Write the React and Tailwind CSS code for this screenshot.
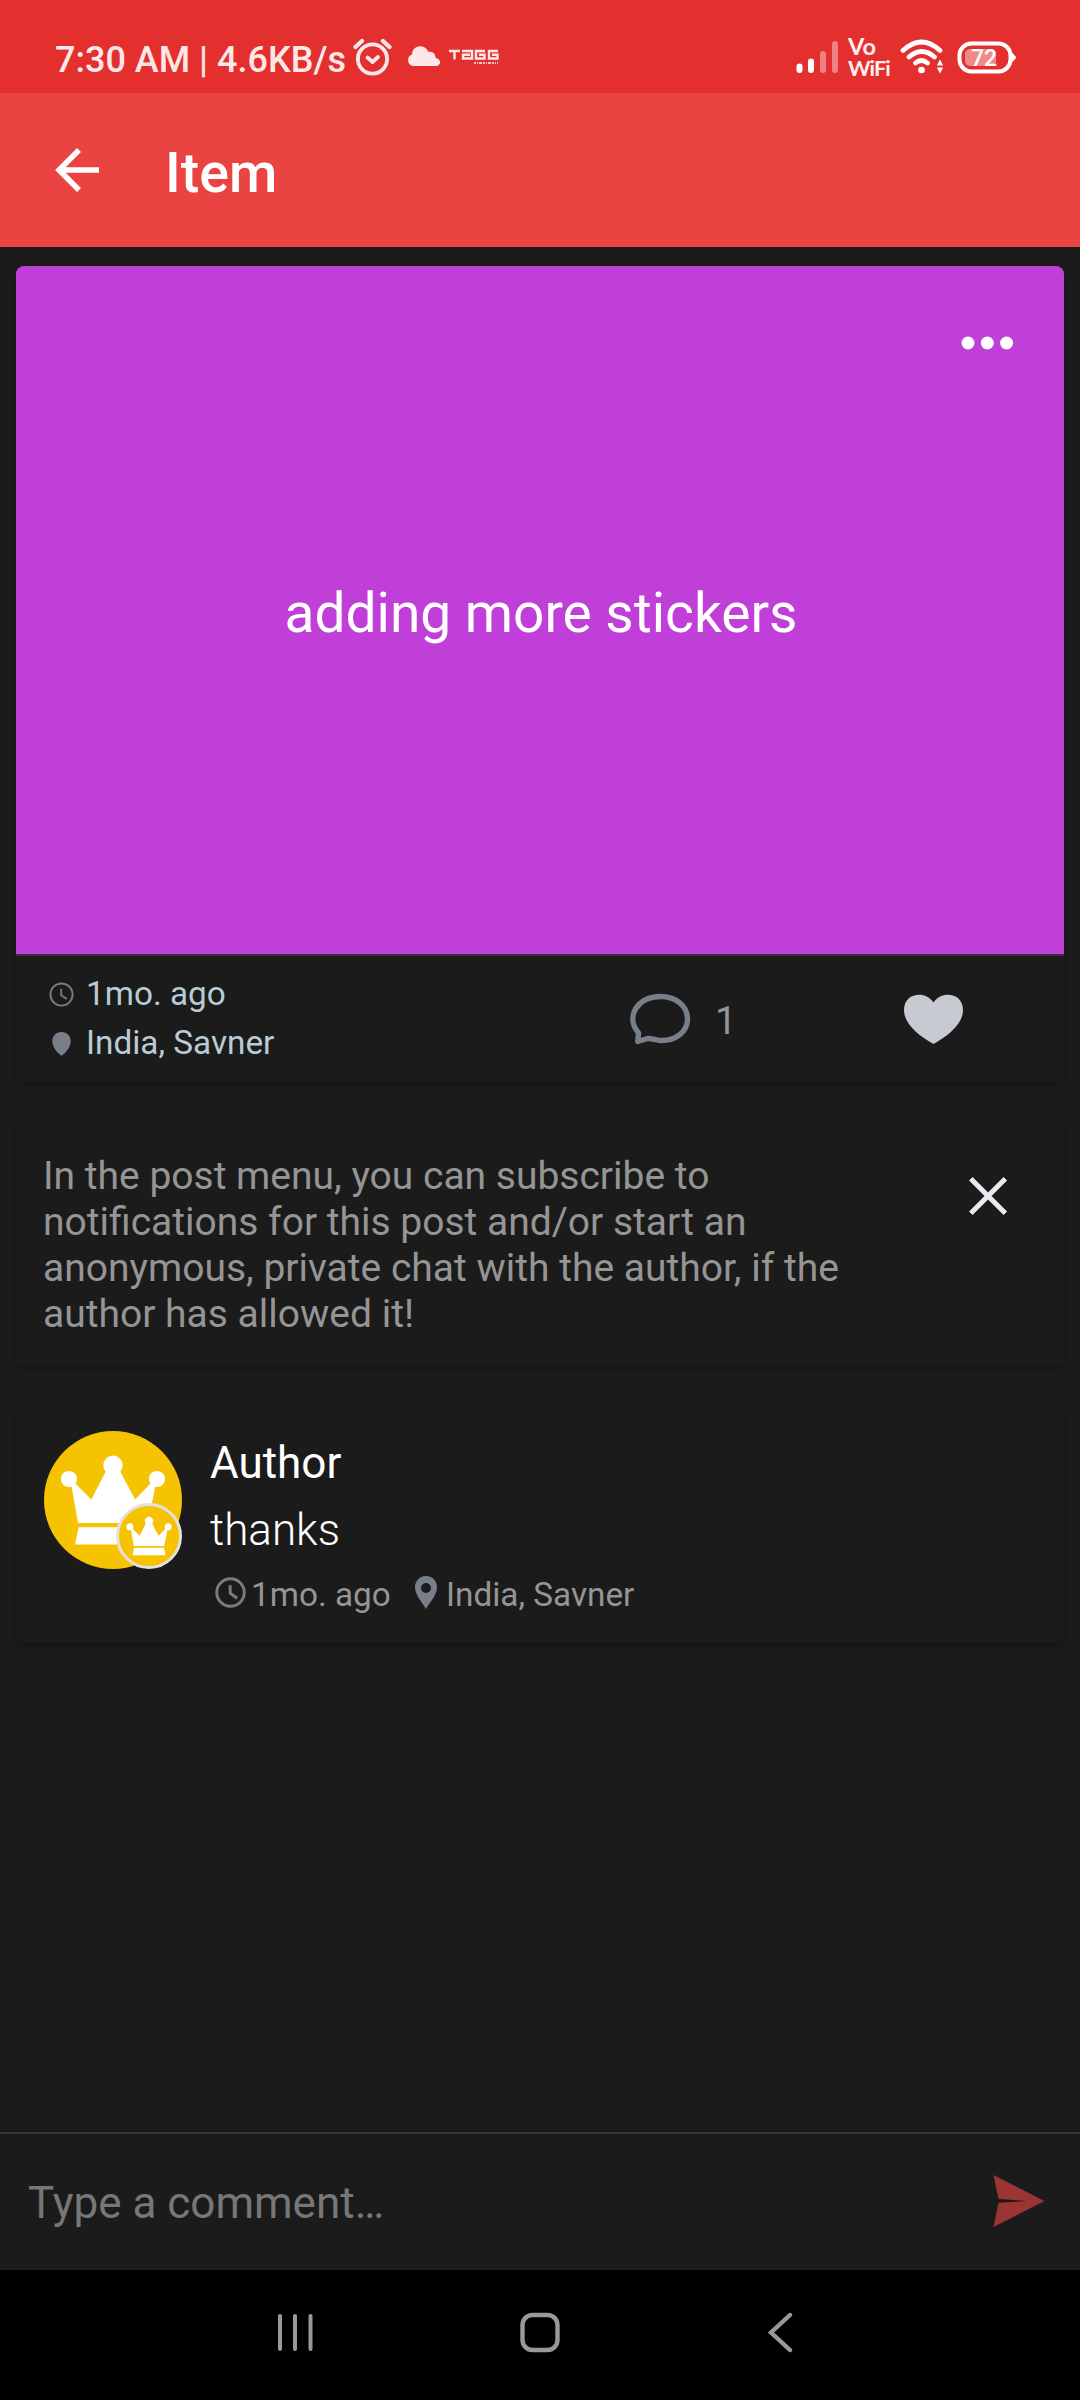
function Crown() {
  return (
    <g fill="#fff">
      <circle cx="69" cy="34.3" r="9.7" />
      <circle cx="25" cy="48" r="8.100" />
      <circle cx="113" cy="48" r="8.100" />
      <path d="M62 40 H76 L91 68.500 L107 52 L112 52 L104 92 H34 L27 52 L31 52 L47.300 68.500 Z" />
      <path d="M34.700 96.300 H103.500 L107 113.500 H31 Z" />
    </g>
  );
}

function Clock({ className, stroke }) {
  return (
    <svg className={className} viewBox="0 0 30 30" fill="none" stroke="#787b82" strokeWidth={stroke}>
      <circle cx="15" cy="15" r="13.3" />
      <path d="M14.700 8 V15.800 L21.500 20.500" />
    </svg>
  );
}

function StatusBar() {
  return (
    <header className="flex h-[93px] items-start bg-[#e3302f] text-[#fde7e7]">
      <span className="ml-[55px] mt-[39px] w-[298px] whitespace-nowrap text-[36px] font-medium leading-[42px]">7:30 AM | 4.6KB/s</span>
      <svg className="mt-[37px] h-[40px] w-[40px] shrink-0" viewBox="0 0 40 40" fill="none" stroke="currentColor" strokeWidth="3.8" strokeLinecap="round">
        <circle cx="19.500" cy="22" r="14.600" />
        <path d="M2.500 10 L9 4 M36.500 10 L30 4" strokeWidth="4.200" />
        <path d="M14.500 20.500 L19.500 25 L25 20" strokeLinejoin="round" />
      </svg>
      <svg className="ml-[14px] mt-[46px] h-[21px] w-[34px] shrink-0" viewBox="0 0 34 21" fill="currentColor">
        <path d="M6 20 A6 6 0 0 1 5 8.500 C5 -1 18 -3 21.500 6 C26 4.500 29 9 28.500 12 C35 13 34 20 29 20 Z" />
      </svg>
      <svg className="ml-[7px] mt-[49px] h-[16px] w-[52px] shrink-0" viewBox="0 0 52 16" fill="none" stroke="currentColor" strokeWidth="2.400">
        <path d="M1 2 H12 M6.500 2 V10.500 M14 2 H24 V9.500 H15 V5.800 H22 M37 2 H28 V9.500 H36.500 V5.800 H31 M50 2 H41 V9.500 H49.500 V5.800 H44" />
        <path d="M26 14 H50" strokeWidth="1.800" strokeDasharray="2 1 1 1 3 1" opacity=".8" />
      </svg>
      <svg className="ml-auto mt-[40px] h-[34px] w-[43px] shrink-0" viewBox="0 0 43 34" fill="none" stroke="#fff" strokeWidth="6" strokeLinecap="round">
        <path d="M3.500 26.500 V30 M15 21.500 V30" />
        <path d="M27 14 V30 M39 4 V30" opacity=".4" />
      </svg>
      <div className="ml-[9px] mt-[34px] w-[44px] font-[Lato,sans-serif] font-bold text-[#fff0f0]">
        <div className="h-[23px] text-[23.500px] leading-[24px]">Vo</div>
        <div className="h-[22px] text-[21.500px] tracking-[-0.900px] leading-[23px]">WiFi</div>
      </div>
      <svg className="ml-[8px] mt-[39px] h-[35px] w-[45px] shrink-0" viewBox="0 0 45 35" fill="none" stroke="#fff" strokeWidth="4.700" strokeLinecap="round">
        <path d="M3 11.500 Q21.500 -5.500 40 11.500 M9 18 Q21.500 7 34.500 18 M15.500 24 Q21.500 19 27.500 24" />
        <circle cx="21.500" cy="31" r="3.300" fill="#fff" stroke="none" />
        <path d="M40 20.500 L43.200 26.500 H36.800 Z M40 34.500 L43.200 28.500 H36.800 Z" fill="#fff" stroke="none" />
      </svg>
      <svg className="ml-[12px] mr-[64px] mt-[41px] h-[33px] w-[59px] shrink-0" viewBox="0 0 59 33" fill="none">
        <rect x="2.500" y="2.500" width="51" height="28" rx="12" stroke="#fff" strokeWidth="4" />
        <path d="M55 12 L59 16.500 L55 21 Z" fill="#fff" stroke="#fff" />
        <rect x="8" y="8" width="31" height="17" rx="5" fill="#f08a8a" />
        <text x="27" y="25" fontFamily="Roboto, sans-serif" fontSize="23" fontWeight="500" fill="#fff" textAnchor="middle">72</text>
      </svg>
    </header>
  );
}

function PostCard() {
  return (
    <section className="h-[816px] overflow-hidden rounded-lg shadow-[0_3px_5px_rgba(0,0,0,0.2)]">
      <div className="relative flex h-[688px] items-center justify-center bg-[#c03fd9]">
        <span className="ml-[2px] mt-[6px] text-[55px] leading-[64px] text-white">adding more stickers</span>
        <svg className="absolute right-[50px] top-[70px] h-[14px] w-[54px]" viewBox="0 0 54 14" fill="#fff">
          <circle cx="8" cy="7" r="6.500" />
          <circle cx="27.300" cy="7" r="6.500" />
          <circle cx="46.600" cy="7" r="6.500" />
        </svg>
      </div>
      <div className="flex h-[128px] border-t-2 border-[#333]">
        <div className="mt-[13px] w-[581px] text-[33.300px] leading-[49px] text-[#b9cbd4]">
          <div className="flex">
            <Clock className="ml-[33px] mt-[13px] h-[25px] w-[25px]" stroke="2.300" />
            <span className="ml-[12px]">1mo. ago</span>
          </div>
          <div className="flex">
            <svg className="ml-[36px] mt-[14px] h-[24px] w-[19px]" viewBox="0 0 19 24" fill="#787f88">
              <path d="M9.500 0 C4 0 .3 4 .3 9 C.3 15 5 21 9.500 23.700 C14 21 18.700 15 18.700 9 C18.700 4 15 0 9.500 0 Z" />
            </svg>
            <span className="ml-[15px]">India, Savner</span>
          </div>
        </div>
        <svg className="ml-[33px] mt-[37px] h-[53px] w-[63px]" viewBox="0 0 63 53" fill="none" stroke="#787f88" strokeWidth="5.400" strokeLinejoin="round">
          <path d="M7.800 48.500 L8.500 40 C-5 24 7 3.500 30.500 3.500 C46 3.500 57.500 13 57.500 26 C57.500 38.500 46 48 30.500 47.500 C26 47.300 21 45 17.500 45.500 Z" />
        </svg>
        <span className="ml-[22px] mt-[42px] text-[38.500px] leading-[46px] text-[#959595]">1</span>
        <svg className="ml-auto mr-[101px] mt-[38px] h-[50px] w-[59px]" viewBox="0 0 59 50" fill="#c8cad1">
          <path d="M29.500 8.500 C37 -3.500 59 -2 59 16 C59 30 44 42 29.500 50 C15 42 0 30 0 16 C0 -2 22 -3.500 29.500 8.500 Z" />
        </svg>
      </div>
    </section>
  );
}

function TipCard() {
  return (
    <section className="flex h-[246px] items-start rounded-lg shadow-[0_3px_5px_rgba(0,0,0,0.2)]">
      <p className="ml-[27px] mt-[33px] whitespace-nowrap text-[39px] leading-[46px] text-[#959595]">
        In the post menu, you can subscribe to<br />
        notifications for this post and/or start an<br />
        anonymous, private chat with the author, if the<br />
        author has allowed it!
      </p>
      <svg className="ml-auto mr-[56px] mt-[56px] h-[40px] w-[40px]" viewBox="0 0 40 40" stroke="#e8ecf0" strokeWidth="5">
        <path d="M2.800 2.800 L37.300 37.300 M37.300 2.800 L2.800 37.300" />
      </svg>
    </section>
  );
}

function CommentCard() {
  return (
    <section className="flex h-[239px] items-start rounded-lg shadow-[0_3px_5px_rgba(0,0,0,0.2)]">
      <div className="relative ml-[28px] mt-[27px] h-[138px] w-[138px] rounded-full bg-[#f5c301]">
        <svg className="h-full w-full" viewBox="0 0 138 138"><Crown /></svg>
        <div className="absolute bottom-0 right-0 h-[66px] w-[66px] rounded-full border-[3px] border-[#e2e2e0] bg-[#f5c301]">
          <svg className="h-full w-full" viewBox="0 0 138 138"><Crown /></svg>
        </div>
      </div>
      <div className="ml-[28px] mt-[29px] text-white">
        <div className="text-[44px] leading-[60px]">Author</div>
        <div className="mt-[7px] text-[44px] font-light leading-[60px]">thanks</div>
        <div className="mt-[12px] flex text-[33.300px] leading-[46px] text-[#959595]">
          <Clock className="ml-[5px] mt-[5px] h-[31px] w-[31px]" stroke="2.900" />
          <span className="ml-[5px] w-[140px] whitespace-nowrap">1mo. ago</span>
          <svg className="ml-[24px] mt-[4px] h-[33px] w-[22px]" viewBox="0 0 22 33" fill="#787f88">
            <path fillRule="evenodd" d="M11 0 C5 0 0 4.800 0 11 C0 19 7 26 11 33 C15 26 22 19 22 11 C22 4.800 17 0 11 0 Z M11 7 A5 5 0 1 1 11 17 A5 5 0 1 1 11 7 Z" />
          </svg>
          <span className="ml-[9px] whitespace-nowrap">India, Savner</span>
        </div>
      </div>
    </section>
  );
}

export default function App() {
  return (
    <div className="flex h-[2400px] w-[1080px] flex-col bg-[#1b1b1b] font-[Roboto,sans-serif]">
      <StatusBar />
      <div className="flex h-[154px] items-start bg-[#e94442]">
        <svg className="ml-[55px] mt-[55px] h-[44px] w-[44px]" viewBox="0 0 44 44" fill="none" stroke="#fff" strokeWidth="5.500">
          <path d="M44 22 H4 M24 2 L4 22 L24 42" />
        </svg>
        <h1 className="ml-[66px] mt-[49px] text-[55.500px] font-medium leading-[64px] text-white">Item</h1>
      </div>
      <main className="flex flex-1 flex-col gap-[38px] px-4 pt-[19px]">
        <PostCard />
        <TipCard />
        <CommentCard />
      </main>
      <div className="flex h-[138px] items-start border-t-2 border-[#383838]">
        <span className="ml-[28px] mt-[43px] text-[44px] leading-[52px] text-[#777]">Type a comment…</span>
        <svg className="ml-auto mr-[35px] mt-[41px] h-[52px] w-[52px]" viewBox="0 0 52 52" fill="#9b3534">
          <path d="M0.500 0 L51.500 26 L0.500 52 L5.500 27.800 L34 26 L5.500 24 Z" />
        </svg>
      </div>
      <nav className="flex h-[130px] bg-black">
        <svg className="ml-[276px] mt-[42px] h-[40px] w-[38px]" viewBox="0 0 38 40" stroke="#999" strokeWidth="4" strokeLinecap="round">
          <path d="M4 4 V37 M19 4 V37 M34.500 4 V37" />
        </svg>
        <svg className="ml-[205px] mt-[41px] h-[42px] w-[42px]" viewBox="0 0 42 42" fill="none" stroke="#999" strokeWidth="4.400">
          <rect x="3.500" y="4" width="35" height="35" rx="10" />
        </svg>
        <svg className="ml-[205px] mt-[42px] h-[42px] w-[28px]" viewBox="0 0 28 42" fill="none" stroke="#999" strokeWidth="4.400" strokeLinecap="round">
          <path d="M24 3 L5 20.500 L24 38" />
        </svg>
      </nav>
    </div>
  );
}
